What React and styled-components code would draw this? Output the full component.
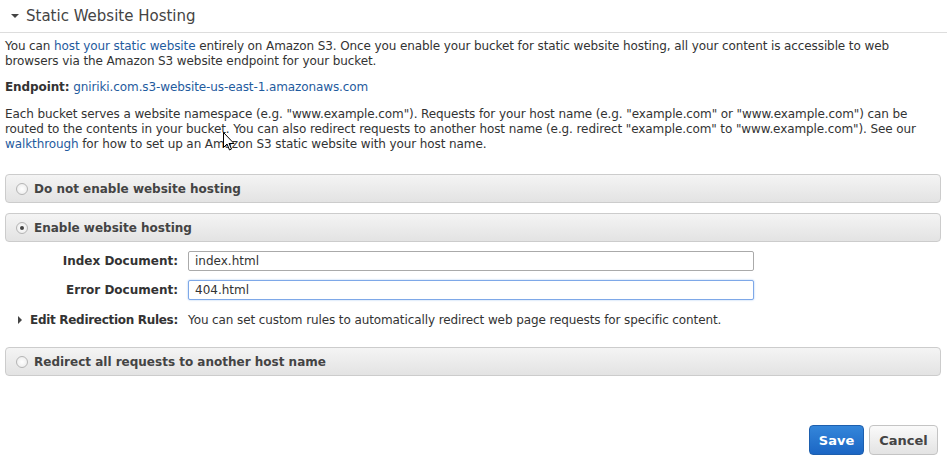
import React from 'react'
import styled, { createGlobalStyle } from 'styled-components'

const GlobalStyle = createGlobalStyle`
  body {
    margin: 0;
    background: #fff;
    font-family: "DejaVu Sans", Verdana, sans-serif;
    font-size: 12px;
    letter-spacing: -0.1px;
    color: #333;
  }
`

const Page = styled.div`
  width: 947px;
  height: 460px;
  overflow: hidden;
`

const Header = styled.div`
  display: flex;
  align-items: center;
  gap: 7px;
  height: 32px;
  padding-left: 11px;
  border-bottom: 1px solid #ddd;
  color: #444;
  font-size: 15px;
  letter-spacing: 0;
`

const Content = styled.div`
  padding: 6px 6px 0 5px;
`

const Para = styled.p`
  position: relative;
  margin: 0 0 ${p => p.$gap || 11}px;
  line-height: 15px;
`

const Link = styled.a`
  color: #1f5b9e;
  text-decoration: none;
`

const Strong = styled.b`
  color: #333;
`

const Options = styled.div`
  display: flex;
  flex-direction: column;
  gap: 10px;
  margin-top: 22px;
`

const OptionBar = styled.label`
  display: flex;
  align-items: center;
  gap: 6px;
  height: 27px;
  padding-left: 10px;
  border: 1px solid #ccc;
  border-radius: 4px;
  background: linear-gradient(#f4f4f4, #e3e3e3);
  color: #444;
  font-weight: bold;
  font-size: 12px;
  letter-spacing: 0;
`

const Radio = styled.span`
  width: 10px;
  height: 10px;
  border-radius: 50%;
  border: 1px solid #b5b5b5;
  background: radial-gradient(circle, #fff, #e8e8e8);
  display: flex;
  align-items: center;
  justify-content: center;
  &::after {
    content: '';
    display: ${p => (p.$checked ? 'block' : 'none')};
    width: 4px;
    height: 4px;
    border-radius: 50%;
    background: #444;
  }
`

const Form = styled.div`
  display: grid;
  grid-template-columns: 173px 566px;
  column-gap: 10px;
  row-gap: 9px;
  align-items: center;
  margin: -1px 0 6px;
`

const FieldLabel = styled.span`
  display: flex;
  align-items: center;
  justify-content: ${p => (p.$left ? 'flex-start' : 'flex-end')};
  gap: 6px;
  height: ${p => (p.$left ? '22px' : 'auto')};
  padding-left: ${p => (p.$left ? '11px' : '0')};
  font-weight: bold;
  font-size: 12px;
  letter-spacing: ${p => (p.$left ? '-0.3px' : '0')};
  white-space: nowrap;
  color: #333;
`

const Input = styled.input`
  box-sizing: border-box;
  height: 20px;
  width: 100%;
  padding: 0 6px;
  border: 1px solid ${p => (p.$focus ? '#7ea8e8' : '#aaa')};
  box-shadow: ${p => (p.$focus ? '0 0 2px #9cc0f0' : 'none')};
  border-radius: 2px;
  font-family: inherit;
  font-size: 12px;
  color: #333;
  outline: none;
`

const Hint = styled.span`
  display: flex;
  align-items: center;
  height: 22px;
  white-space: nowrap;
`

const Footer = styled.div`
  display: flex;
  justify-content: flex-end;
  gap: 5px;
  margin-top: 49px;
  padding-right: 3px;
`

const Button = styled.button`
  box-sizing: border-box;
  width: ${p => (p.$primary ? '55px' : '69px')};
  height: 30px;
  padding: 0;
  border-radius: 4px;
  border: 1px solid ${p => (p.$primary ? '#1d5fae' : '#c4c4c4')};
  background: ${p =>
    p.$primary
      ? 'linear-gradient(#3486da, #1b66c4)'
      : 'linear-gradient(#fafafa, #e3e3e3)'};
  color: ${p => (p.$primary ? '#fff' : '#444')};
  font-family: inherit;
  font-weight: bold;
  font-size: 13px;
`

const Cursor = styled.svg`
  position: absolute;
  left: 218px;
  top: 25px;
`

const Caret = ({ dir }) => (
  <svg width="8" height="8" viewBox="0 0 8 8">
    {dir === 'down' ? (
      <path d="M0 2h8L4 6z" fill="#444" />
    ) : (
      <path d="M2 0v8l4-4z" fill="#444" />
    )}
  </svg>
)

export default function App() {
  return (
    <Page>
      <GlobalStyle />
      <Header>
        <Caret dir="down" />
        Static Website Hosting
      </Header>
      <Content>
        <Para>
          You can <Link>host your static website</Link> entirely on Amazon S3. Once you enable your
          bucket for static website hosting, all your content is accessible to web browsers via the
          Amazon S3 website endpoint for your bucket.
        </Para>
        <Para $gap={12}>
          <Strong>Endpoint:</Strong> <Link>gniriki.com.s3-website-us-east-1.amazonaws.com</Link>
        </Para>
        <Para $gap={0}>
          Each bucket serves a website namespace (e.g. "www.example.com"). Requests for your host name
          (e.g. "example.com" or "www.example.com") can be routed to the contents in your bucket. You
          can also redirect requests to another host name (e.g. redirect "example.com" to
          "www.example.com"). See our <Link>walkthrough</Link> for how to set up an Amazon S3 static
          website with your host name.
          <Cursor width="12" height="19" viewBox="0 0 12 19">
            <path d="M0.5 0.5v15l3.5-3.5 2.5 6 2-1-2.5-5.5h5z" fill="#fff" stroke="#000" strokeWidth="1" />
          </Cursor>
        </Para>
        <Options>
          <OptionBar>
            <Radio />
            Do not enable website hosting
          </OptionBar>
          <OptionBar>
            <Radio $checked />
            Enable website hosting
          </OptionBar>
          <Form>
            <FieldLabel>Index Document:</FieldLabel>
            <Input defaultValue="index.html" />
            <FieldLabel>Error Document:</FieldLabel>
            <Input $focus defaultValue="404.html" />
            <FieldLabel $left>
              <Caret dir="right" />
              Edit Redirection Rules:
            </FieldLabel>
            <Hint>You can set custom rules to automatically redirect web page requests for specific content.</Hint>
          </Form>
          <OptionBar>
            <Radio />
            Redirect all requests to another host name
          </OptionBar>
        </Options>
        <Footer>
          <Button $primary>Save</Button>
          <Button>Cancel</Button>
        </Footer>
      </Content>
    </Page>
  )
}
